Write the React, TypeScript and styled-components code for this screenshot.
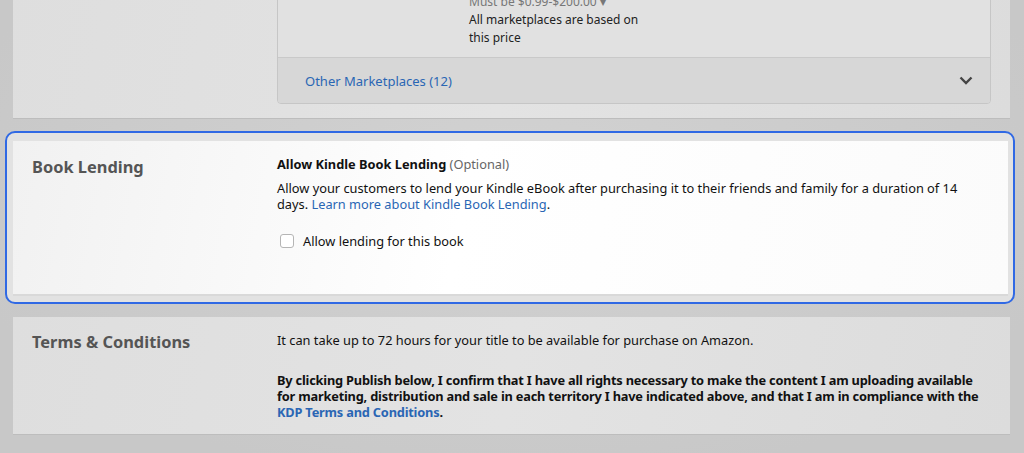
import React from "react";
import styled, { createGlobalStyle } from "styled-components";

const GlobalStyle = createGlobalStyle`
  html, body {
    margin: 0;
    padding: 0;
    background: #cbcbcb;
    overflow: hidden;
  }
  body {
    font-family: "Noto Sans", "Open Sans", Arial, sans-serif;
    color: #111;
  }
`;

const Page = styled.div`
  height: 453px;
  padding: 0 14px 0 13px;
  background: radial-gradient(ellipse at 50% 40%, #d2d2d2 0%, #c8c8c8 80%);
  overflow: hidden;
`;

const Card = styled.section<{ $offset?: number }>`
  display: grid;
  grid-template-columns: 245px 1fr;
  margin-top: ${(p) => p.$offset ?? 0}px;
  background: linear-gradient(100deg, #dedede 0%, #e3e3e3 50%, #dcdcdc 100%);
  box-shadow: 0 1px 0 #bdbdbd;
`;

const PricingCard = styled(Card)`
  padding: 20px 19px 14px 19px;
`;

const PriceBox = styled.div`
  border: 1px solid #c6c6c6;
  border-radius: 4px;
  overflow: hidden;
  background: #e1e1e1;
`;

const PriceTop = styled.div`
  display: grid;
  grid-template-columns: 191px 1fr;
  padding: 23px 0 10px 0;
  border-bottom: 1px solid #c9c9c9;
`;

const PriceNote = styled.div`
  font-size: 12px;
  line-height: 18px;
  color: #222;
`;

const Muted = styled.div`
  color: #777;
`;

const PriceFoot = styled.div`
  display: flex;
  align-items: center;
  justify-content: space-between;
  height: 45px;
  padding: 0 17px 0 27px;
  background: #d7d7d7;
`;

const Link = styled.a<{ $bold?: boolean }>`
  color: #2a66b4;
  font-weight: ${(p) => (p.$bold ? 700 : 400)};
  text-decoration: none;
`;

const FootLink = styled(Link)`
  font-size: 13px;
`;

const FocusRing = styled.div`
  margin: 13px -5px 0 -8px;
  padding: 8px 5px 6px 6px;
  border: 2px solid #3069e4;
  border-radius: 10px;
  background: #e2e2e2;
`;

const LendingCard = styled(Card)`
  padding: 15px 19px 42px 19px;
  min-height: 96px;
  background: linear-gradient(100deg, #f1f1f1 0%, #ffffff 45%, #fbfbfb 100%);
  border-bottom: 2px solid #d9d9d9;
  box-shadow: none;
`;

const TermsCard = styled(Card)`
  margin-top: 13px;
  padding: 14px 19px 14px 19px;
`;

const SectionTitle = styled.h2`
  margin: 0;
  font-size: 16.4px;
  line-height: 22px;
  font-weight: 700;
  color: #555;
`;

const Body = styled.div<{ $top?: number }>`
  font-size: 12.8px;
  line-height: 16px;
  color: #111;
  padding-right: 4px;
  margin-top: ${(p) => p.$top ?? 0}px;
`;

const Heading = styled.div`
  font-weight: 700;
  margin-bottom: 8px;
`;

const Optional = styled.span`
  font-weight: 400;
  color: #666;
`;

const Para = styled.p<{ $bold?: boolean; $gap?: number }>`
  margin: 0 0 ${(p) => p.$gap ?? 0}px 0;
  font-weight: ${(p) => (p.$bold ? 700 : 400)};
  letter-spacing: ${(p) => (p.$bold ? "-0.2px" : "0")};
`;

const CheckRow = styled.label`
  display: flex;
  align-items: center;
  gap: 9px;
  margin-top: 21px;
  padding-left: 3px;
`;

const CheckBox = styled.span`
  width: 12px;
  height: 12px;
  border: 1px solid #b5b5b5;
  border-radius: 3px;
  background: #fff;
`;

const Chevron = () => (
  <svg width="14" height="9" viewBox="0 0 14 9">
    <path d="M1.5 1.5 L7 7 L12.5 1.5" fill="none" stroke="#444" strokeWidth="2.4" />
  </svg>
);

export default function App() {
  return (
    <>
      <GlobalStyle />
      <Page>
        <PricingCard $offset={-51}>
          <div />
          <PriceBox>
            <PriceTop>
              <div />
              <PriceNote>
                <Muted>Must be $0.99-$200.00 ▾</Muted>
                <div>All marketplaces are based on</div>
                <div>this price</div>
              </PriceNote>
            </PriceTop>
            <PriceFoot>
              <FootLink href="#">Other Marketplaces (12)</FootLink>
              <Chevron />
            </PriceFoot>
          </PriceBox>
        </PricingCard>

        <FocusRing>
          <LendingCard>
            <SectionTitle>Book Lending</SectionTitle>
            <Body>
              <Heading>
                Allow Kindle Book Lending <Optional>(Optional)</Optional>
              </Heading>
              <Para>
                Allow your customers to lend your Kindle eBook after purchasing it to their friends and
                family for a duration of 14 days.{" "}
                <Link href="#">Learn more about Kindle Book Lending</Link>.
              </Para>
              <CheckRow>
                <CheckBox />
                Allow lending for this book
              </CheckRow>
            </Body>
          </LendingCard>
        </FocusRing>

        <TermsCard>
          <SectionTitle>Terms &amp; Conditions</SectionTitle>
          <Body $top={1}>
            <Para $gap={24}>It can take up to 72 hours for your title to be available for purchase on Amazon.</Para>
            <Para $bold>
              By clicking Publish below, I confirm that I have all rights necessary to make the content I am
              uploading available for marketing, distribution and sale in each territory I have indicated
              above, and that I am in compliance with the{" "}
              <Link $bold href="#">
                KDP Terms and Conditions
              </Link>
              .
            </Para>
          </Body>
        </TermsCard>
      </Page>
    </>
  );
}
